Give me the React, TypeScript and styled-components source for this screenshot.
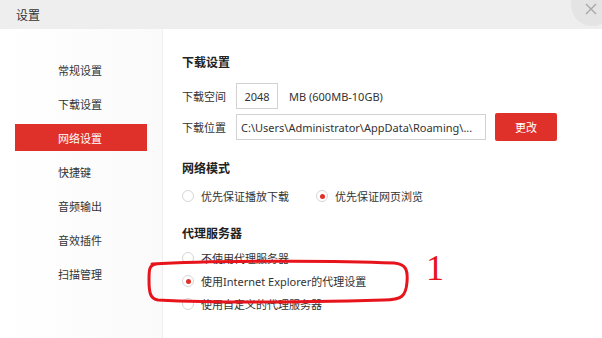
import React from 'react';
import styled, { createGlobalStyle } from 'styled-components';

const GlobalStyle = createGlobalStyle`
  html, body {
    margin: 0;
    padding: 0;
    background: #ffffff;
  }
  body {
    font-family: "Noto Sans", "Noto Sans CJK SC", sans-serif;
    color: #333333;
  }
`;

const Window = styled.div`
  width: 602px;
  height: 338px;
  position: relative;
  overflow: hidden;
  display: flex;
  flex-direction: column;
  background: #ffffff;
`;

const TitleBar = styled.div`
  height: 29px;
  flex-shrink: 0;
  background: #eeeeee;
  display: flex;
  align-items: center;
  padding-left: 16px;
  font-size: 12px;
  color: #333333;
  position: relative;
`;

const CloseButton = styled.div`
  position: absolute;
  width: 42px;
  height: 42px;
  border-radius: 50%;
  background: #e4e4e4;
  right: -11px;
  top: -16px;

  svg {
    position: absolute;
    left: 14px;
    top: 19px;
  }
`;

const Body = styled.div`
  flex: 1;
  display: flex;
`;

const Sidebar = styled.div`
  width: 163px;
  border-right: 1px solid #efefef;
  background: linear-gradient(90deg, #ffffff 0%, #fafafa 100%);
  padding-top: 27px;
  box-sizing: border-box;
  display: flex;
  flex-direction: column;
  gap: 7px;
`;

const NavItem = styled.div<{ $active?: boolean }>`
  margin-left: 15px;
  width: 132px;
  height: 27px;
  padding-left: 43px;
  box-sizing: border-box;
  display: flex;
  align-items: center;
  font-size: 11px;
  color: ${(p) => (p.$active ? '#ffffff' : '#333333')};
  background: ${(p) => (p.$active ? '#e0302a' : 'transparent')};
`;

const Content = styled.div`
  flex: 1;
  padding: 25px 0 0 19px;
  display: flex;
  flex-direction: column;
`;

const SectionTitle = styled.div<{ $top: number }>`
  margin-top: ${(p) => p.$top}px;
  font-size: 12px;
  font-weight: bold;
  color: #222222;
  line-height: 17px;
  height: 17px;
`;

const FieldRow = styled.div<{ $top: number }>`
  margin-top: ${(p) => p.$top}px;
  display: flex;
  align-items: center;
  font-size: 11px;
  height: 28px;
`;

const FieldLabel = styled.span`
  width: 54px;
  flex-shrink: 0;
  font-size: 11px;
  color: #333333;
`;

const TextBox = styled.div<{ $width: number; $center?: boolean }>`
  width: ${(p) => p.$width}px;
  height: 26px;
  box-sizing: border-box;
  border: 1px solid #d2d2d2;
  background: #ffffff;
  display: flex;
  align-items: center;
  justify-content: ${(p) => (p.$center ? 'center' : 'flex-start')};
  padding-left: ${(p) => (p.$center ? 0 : 4)}px;
  font-size: 11px;
  color: #333333;
  white-space: nowrap;
  overflow: hidden;
`;

const Hint = styled.span`
  margin-left: 11px;
  font-size: 11px;
  color: #333333;
`;

const RedButton = styled.div`
  margin-left: 9px;
  width: 62px;
  height: 28px;
  border-radius: 2px;
  background: #e0302a;
  color: #ffffff;
  font-size: 11px;
  display: flex;
  align-items: center;
  justify-content: center;
`;

const RadioRow = styled.div<{ $top: number }>`
  margin-top: ${(p) => p.$top}px;
  display: flex;
  align-items: center;
  height: 20px;
`;

const RadioOption = styled.div<{ $width?: number }>`
  display: flex;
  align-items: center;
  gap: 7px;
  width: ${(p) => (p.$width ? `${p.$width}px` : 'auto')};
  font-size: 11px;
  color: #333333;
`;

const RadioDot = styled.span<{ $checked?: boolean }>`
  width: 12px;
  height: 12px;
  border-radius: 50%;
  box-sizing: border-box;
  border: 1px solid #d6d6d6;
  background: #ffffff;
  position: relative;
  flex-shrink: 0;

  &::after {
    content: '';
    display: ${(p) => (p.$checked ? 'block' : 'none')};
    position: absolute;
    left: 2.5px;
    top: 2.5px;
    width: 5px;
    height: 5px;
    border-radius: 50%;
    background: #e0302a;
  }
`;

const ProxyList = styled.div`
  margin-top: 6px;
  display: flex;
  flex-direction: column;
  gap: 3px;
`;

const Annotation = styled.svg`
  position: absolute;
  left: 144px;
  top: 258px;
`;

const AnnotationNumber = styled.div`
  position: absolute;
  left: 426px;
  top: 248px;
  font-family: "Liberation Serif", serif;
  font-size: 36px;
  line-height: 40px;
  color: #e8141c;
`;

const navItems = ['常规设置', '下载设置', '网络设置', '快捷键', '音频输出', '音效插件', '扫描管理'];

const proxyOptions = [
  { label: '不使用代理服务器', checked: false },
  { label: '使用Internet Explorer的代理设置', checked: true },
  { label: '使用自定义的代理服务器', checked: false },
];

export default function App() {
  return (
    <>
      <GlobalStyle />
      <Window>
        <TitleBar>
          设置
          <CloseButton>
            <svg width="12" height="12" viewBox="0 0 12 12">
              <path d="M1 1 L11 11 M11 1 L1 11" stroke="#a8a8a8" strokeWidth="1.4" />
            </svg>
          </CloseButton>
        </TitleBar>
        <Body>
          <Sidebar>
            {navItems.map((item) => (
              <NavItem key={item} $active={item === '网络设置'}>
                {item}
              </NavItem>
            ))}
          </Sidebar>
          <Content>
            <SectionTitle $top={0}>下载设置</SectionTitle>
            <FieldRow $top={11}>
              <FieldLabel>下载空间</FieldLabel>
              <TextBox $width={42} $center>
                2048
              </TextBox>
              <Hint>MB (600MB-10GB)</Hint>
            </FieldRow>
            <FieldRow $top={3}>
              <FieldLabel>下载位置</FieldLabel>
              <TextBox $width={250}>C:\Users\Administrator\AppData\Roaming\...</TextBox>
              <RedButton>更改</RedButton>
            </FieldRow>
            <SectionTitle $top={19}>网络模式</SectionTitle>
            <RadioRow $top={9}>
              <RadioOption $width={134}>
                <RadioDot />
                优先保证播放下载
              </RadioOption>
              <RadioOption>
                <RadioDot $checked />
                优先保证网页浏览
              </RadioOption>
            </RadioRow>
            <SectionTitle $top={19}>代理服务器</SectionTitle>
            <ProxyList>
              {proxyOptions.map((opt) => (
                <RadioRow key={opt.label} $top={0}>
                  <RadioOption>
                    <RadioDot $checked={opt.checked} />
                    {opt.label}
                  </RadioOption>
                </RadioRow>
              ))}
            </ProxyList>
          </Content>
        </Body>
        <Annotation width="270" height="48" viewBox="0 0 270 48">
          <path
            d="M8 6 C60 3 180 2 250 5 C262 6 264 12 263 24 C262 38 258 42 240 42 C170 44 70 45 14 42 C6 41 5 34 5 22 C5 12 5 7 12 6"
            fill="none"
            stroke="#e8141c"
            strokeWidth="3"
            strokeLinecap="round"
          />
        </Annotation>
        <AnnotationNumber>1</AnnotationNumber>
      </Window>
    </>
  );
}
